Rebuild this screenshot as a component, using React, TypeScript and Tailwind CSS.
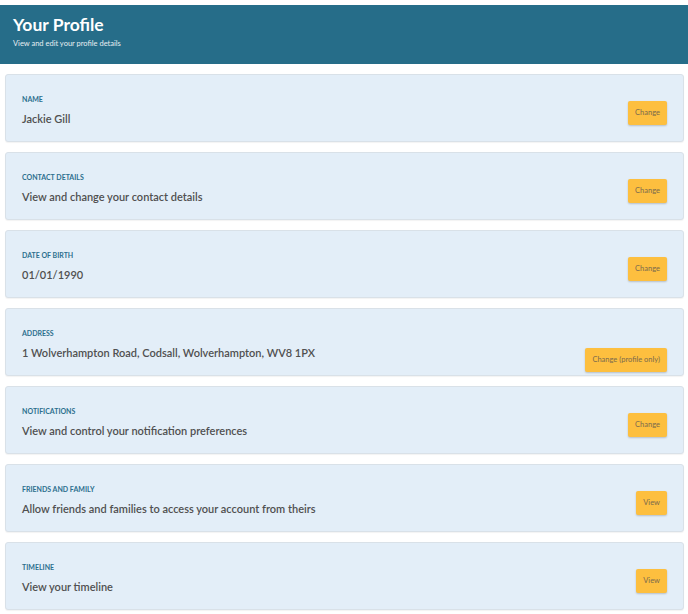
import React from "react";

type Row = {
  label: string;
  value: string;
  action: string;
  lowButton?: boolean;
};

const rows: Row[] = [
  { label: "Name", value: "Jackie Gill", action: "Change" },
  { label: "Contact details", value: "View and change your contact details", action: "Change" },
  { label: "Date of birth", value: "01/01/1990", action: "Change" },
  {
    label: "Address",
    value: "1 Wolverhampton Road, Codsall, Wolverhampton, WV8 1PX",
    action: "Change (profile only)",
    lowButton: true,
  },
  { label: "Notifications", value: "View and control your notification preferences", action: "Change" },
  { label: "Friends and family", value: "Allow friends and families to access your account from theirs", action: "View" },
  { label: "Timeline", value: "View your timeline", action: "View" },
];

export default function App() {
  return (
    <div
      className="min-h-[614px] bg-white pt-[5px]"
      style={{ fontFamily: "Lato, 'Open Sans', sans-serif" }}
    >
      {/* header */}
      <div className="h-[59px] bg-[#266d89] px-[13px] pt-[10px] text-white">
        <h1 className="text-[17.5px] font-bold leading-[20px]">Your Profile</h1>
        <p className="mt-[4px] text-[7.5px] leading-[9px] text-[#e6eef2]">
          View and edit your profile details
        </p>
      </div>

      {/* profile rows */}
      <div className="mt-[10px] flex flex-col gap-[10px] pl-[5px] pr-[4px]">
        {rows.map((row) => (
          <div
            key={row.label}
            className="flex h-[68px] items-end justify-between rounded-[3px] border border-[#d9e1e8] bg-[#e3eef8] pb-[15px] pl-[16px] pr-[16px] shadow-[0_1px_1px_rgba(0,0,0,0.05)]"
          >
            <div>
              <div className="text-[7px] font-bold uppercase leading-[10px] text-[#2c6f8e]">
                {row.label}
              </div>
              <div className="mt-[8px] text-[11px] font-semibold leading-[14px] text-[#505050]">
                {row.value}
              </div>
            </div>
            <button
              className={
                row.lowButton
                  ? "mb-[-12px] h-[24px] rounded-[2px] bg-[#fdbf3f] px-[7px] text-[7.5px] text-[#7a6a4e] shadow-[0_1px_2px_rgba(0,0,0,0.2)]"
                  : "mb-[1px] h-[24px] rounded-[2px] bg-[#fdbf3f] px-[7px] text-[7.5px] text-[#7a6a4e] shadow-[0_1px_2px_rgba(0,0,0,0.2)]"
              }
            >
              {row.action}
            </button>
          </div>
        ))}
      </div>
    </div>
  );
}
